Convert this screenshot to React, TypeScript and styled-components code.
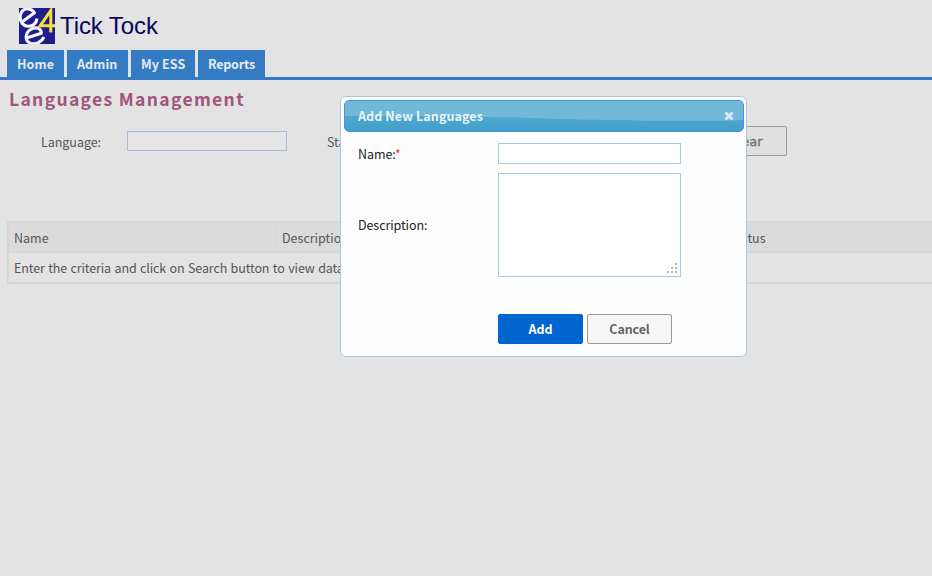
import React from 'react';
import styled, { createGlobalStyle } from 'styled-components';

const Global = createGlobalStyle`
  * { box-sizing: border-box; }
  body {
    margin: 0;
    background: #e3e3e3;
    font-family: 'Noto Sans CJK SC', 'Noto Sans', sans-serif;
    font-size: 12.5px;
    line-height: 18px;
    color: #555;
    overflow: hidden;
  }
  input, textarea, button { font-family: inherit; font-size: 12.5px; margin: 0; }
`;

const Page = styled.div`
  height: 576px;
  position: relative;
  overflow: hidden;
`;

const Brand = styled.header`
  display: flex;
  height: 50px;
  padding: 8px 0 0 19px;
  gap: 5px;
`;

const BrandName = styled.span`
  font: 24px/36px 'Liberation Sans', Arial, sans-serif;
  color: #06065c;
  letter-spacing: -0.1px;
`;

const Nav = styled.nav`
  display: flex;
  gap: 3px;
  height: 30px;
  padding-left: 7px;
  border-bottom: 3px solid #337bc3;
`;

const Tab = styled.a<{ $width: number; $tracking: number }>`
  width: ${(p) => p.$width}px;
  padding-left: 10px;
  background: #337bc3;
  color: #e6eaee;
  font-weight: 700;
  line-height: 28px;
  white-space: nowrap;
  letter-spacing: ${(p) => p.$tracking}px;
`;

const Title = styled.h1`
  margin: 0;
  height: 46px;
  padding: 7px 0 0 9px;
  font-size: 17.5px;
  line-height: 24px;
  letter-spacing: 1.33px;
  color: #a0557b;
`;

const SearchBar = styled.div`
  display: flex;
  align-items: flex-start;
  height: 95px;
  width: 787px;
  padding-left: 41px;
`;

const FilterLabel = styled.label<{ $width: number }>`
  width: ${(p) => p.$width}px;
  padding-top: 7px;
  letter-spacing: -0.04px;
`;

const FilterInput = styled.input`
  width: 160px;
  height: 20px;
  margin: 5px 40px 0 0;
  border: 1px solid #a5bdd7;
  background: #e5e5e5;
`;

const ClearButton = styled.button`
  width: 85px;
  height: 30px;
  margin-left: auto;
  padding: 0 0 0 2px;
  border: 1px solid #9b9b9b;
  border-radius: 2px;
  background: #e0e0e0;
  color: #757575;
  font: 13px 'DejaVu Sans', sans-serif;
  -webkit-text-stroke: 0.4px #757575;
`;

const Grid = styled.div`
  width: 1000px;
  margin-left: 7px;
  border: 2px solid #d7d7d7;
`;

const HeadRow = styled.div`
  display: grid;
  grid-template-columns: 268px 447px 1fr;
  height: 30px;
  background: #dbdbdb;
  border-bottom: 1px solid #d5d5d5;
`;

const HeadCell = styled.div`
  padding: 6px 0 0 5px;
  border-right: 1px solid #d5d5d5;
`;

const EmptyRow = styled.div`
  height: 29px;
  padding: 6px 0 0 5px;
  letter-spacing: -0.12px;
  word-spacing: 0.8px;
`;

const Dialog = styled.section`
  position: absolute;
  left: 340px;
  top: 96px;
  width: 407px;
  height: 261px;
  padding: 3px 2px 0 3px;
  border: 1px solid #a3c9e5;
  border-radius: 6px;
  background: #fdfdfd;
  color: #222;
`;

const DialogHeader = styled.div`
  position: relative;
  display: flex;
  align-items: center;
  justify-content: space-between;
  height: 32px;
  padding: 0 9px 0 13px;
  border: 1px solid #4297d7;
  border-radius: 5px;
  overflow: hidden;
  background: linear-gradient(#4ea9cf 50%, #429fc9);
`;

const Gloss = styled.svg`
  position: absolute;
  inset: 0;
`;

const DialogTitle = styled.h2`
  position: relative;
  margin: 0;
  font-size: 12.5px;
  line-height: 18px;
  letter-spacing: 0.1px;
  color: #eaf5f7;
`;

const CloseIcon = styled.svg`
  position: relative;
`;

const Form = styled.form`
  display: grid;
  grid-template-columns: 140px 183px;
  grid-template-rows: 21px 104px 30px;
  row-gap: 9px;
  padding: 11px 0 0 14px;
`;

const FormLabel = styled.label`
  align-self: center;
  letter-spacing: -0.08px;
`;

const Required = styled.em`
  font-style: normal;
  color: #ff3030;
`;

const TextInput = styled.input`
  height: 21px;
  border: 1px solid #a6c9e2;
  background: #fff;
`;

const AreaWrap = styled.div`
  position: relative;
  height: 104px;
`;

const TextArea = styled.textarea`
  display: block;
  width: 183px;
  height: 104px;
  border: 1px solid #a6c9e2;
  background: #fff;
  resize: none;
`;

const Grip = styled.svg`
  position: absolute;
  right: 4px;
  bottom: 4px;
`;

const Actions = styled.div`
  grid-column: 2;
  display: flex;
  gap: 4px;
  padding-top: 28px;
`;

const ActionButton = styled.button<{ $primary?: boolean }>`
  flex: none;
  width: 85px;
  height: 30px;
  padding: 0 0 1px;
  border: 1px solid ${(p) => (p.$primary ? '#0066cf' : '#999')};
  border-radius: 2px;
  background: ${(p) => (p.$primary ? '#0066cf' : '#f6f6f6')};
  color: ${(p) => (p.$primary ? '#fff' : '#666')};
  font-weight: 700;
  letter-spacing: -0.1px;
`;

const tabs = [
  { label: 'Home', width: 57, tracking: 0.1 },
  { label: 'Admin', width: 61, tracking: 0.1 },
  { label: 'My ESS', width: 64, tracking: 0.1 },
  { label: 'Reports', width: 67, tracking: -0.2 },
];

const gripDots = [[8, 0], [4, 4], [8, 4], [0, 8], [4, 8], [8, 8]];

function Logo() {
  return (
    <svg width="36" height="36" viewBox="0 0 36 36">
      <rect width="36" height="36" fill="#1d1d8b" />
      <g fill="none" stroke="#f4f4fa" strokeWidth="3.1" strokeLinejoin="round">
        <path d="M3 14 15.5 4.8C12.5 0 6 -0.5 3 3.5C-1 9 2 17.5 8.5 18.2C13.5 18.8 17.5 15.5 18 10.5" />
        <path d="M7.5 30 22.3 25.2C22.5 20.5 17.5 18.6 12.8 20.8C6 24 5.5 32 10.5 34.8C16 37.5 22.5 34.5 25 29" />
      </g>
      <path d="M36 17.8H21.2L31.8 2.5V24.5" fill="none" stroke="#f8e03c" strokeWidth="3" />
    </svg>
  );
}

export default function App() {
  return (
    <Page>
      <Global />
      <Brand>
        <Logo />
        <BrandName>Tick Tock</BrandName>
      </Brand>
      <Nav>
        {tabs.map((t) => (
          <Tab key={t.label} $width={t.width} $tracking={t.tracking}>{t.label}</Tab>
        ))}
      </Nav>
      <Title>Languages Management</Title>
      <SearchBar>
        <FilterLabel $width={86}>Language:</FilterLabel>
        <FilterInput />
        <FilterLabel $width={86}>Status:</FilterLabel>
        <ClearButton>Clear</ClearButton>
      </SearchBar>
      <Grid>
        <HeadRow>
          <HeadCell>Name</HeadCell>
          <HeadCell>Description</HeadCell>
          <HeadCell>Status</HeadCell>
        </HeadRow>
        <EmptyRow>Enter the criteria and click on Search button to view data</EmptyRow>
      </Grid>
      <Dialog>
        <DialogHeader>
          <Gloss width="398" height="30" viewBox="0 0 398 30">
            <path d="M0 0H398V19C350 20.5 290 20 215 18C150 15.5 80 14.5 0 15Z" fill="#72b8d8" />
          </Gloss>
          <DialogTitle>Add New Languages</DialogTitle>
          <CloseIcon width="10" height="10" viewBox="0 0 10 10">
            <path d="M1.5 1.5 8.5 8.5M8.5 1.5 1.5 8.5" stroke="#d9e8f7" strokeWidth="3" />
          </CloseIcon>
        </DialogHeader>
        <Form>
          <FormLabel>Name:<Required>*</Required></FormLabel>
          <TextInput />
          <FormLabel>Description:</FormLabel>
          <AreaWrap>
            <TextArea />
            <Grip width="10" height="10" viewBox="0 0 10 10" fill="#b9b9b9">
              {gripDots.map(([x, y]) => (
                <rect key={`${x}-${y}`} x={x} y={y} width="2" height="2" />
              ))}
            </Grip>
          </AreaWrap>
          <Actions>
            <ActionButton type="button" $primary>Add</ActionButton>
            <ActionButton type="button">Cancel</ActionButton>
          </Actions>
        </Form>
      </Dialog>
    </Page>
  );
}
